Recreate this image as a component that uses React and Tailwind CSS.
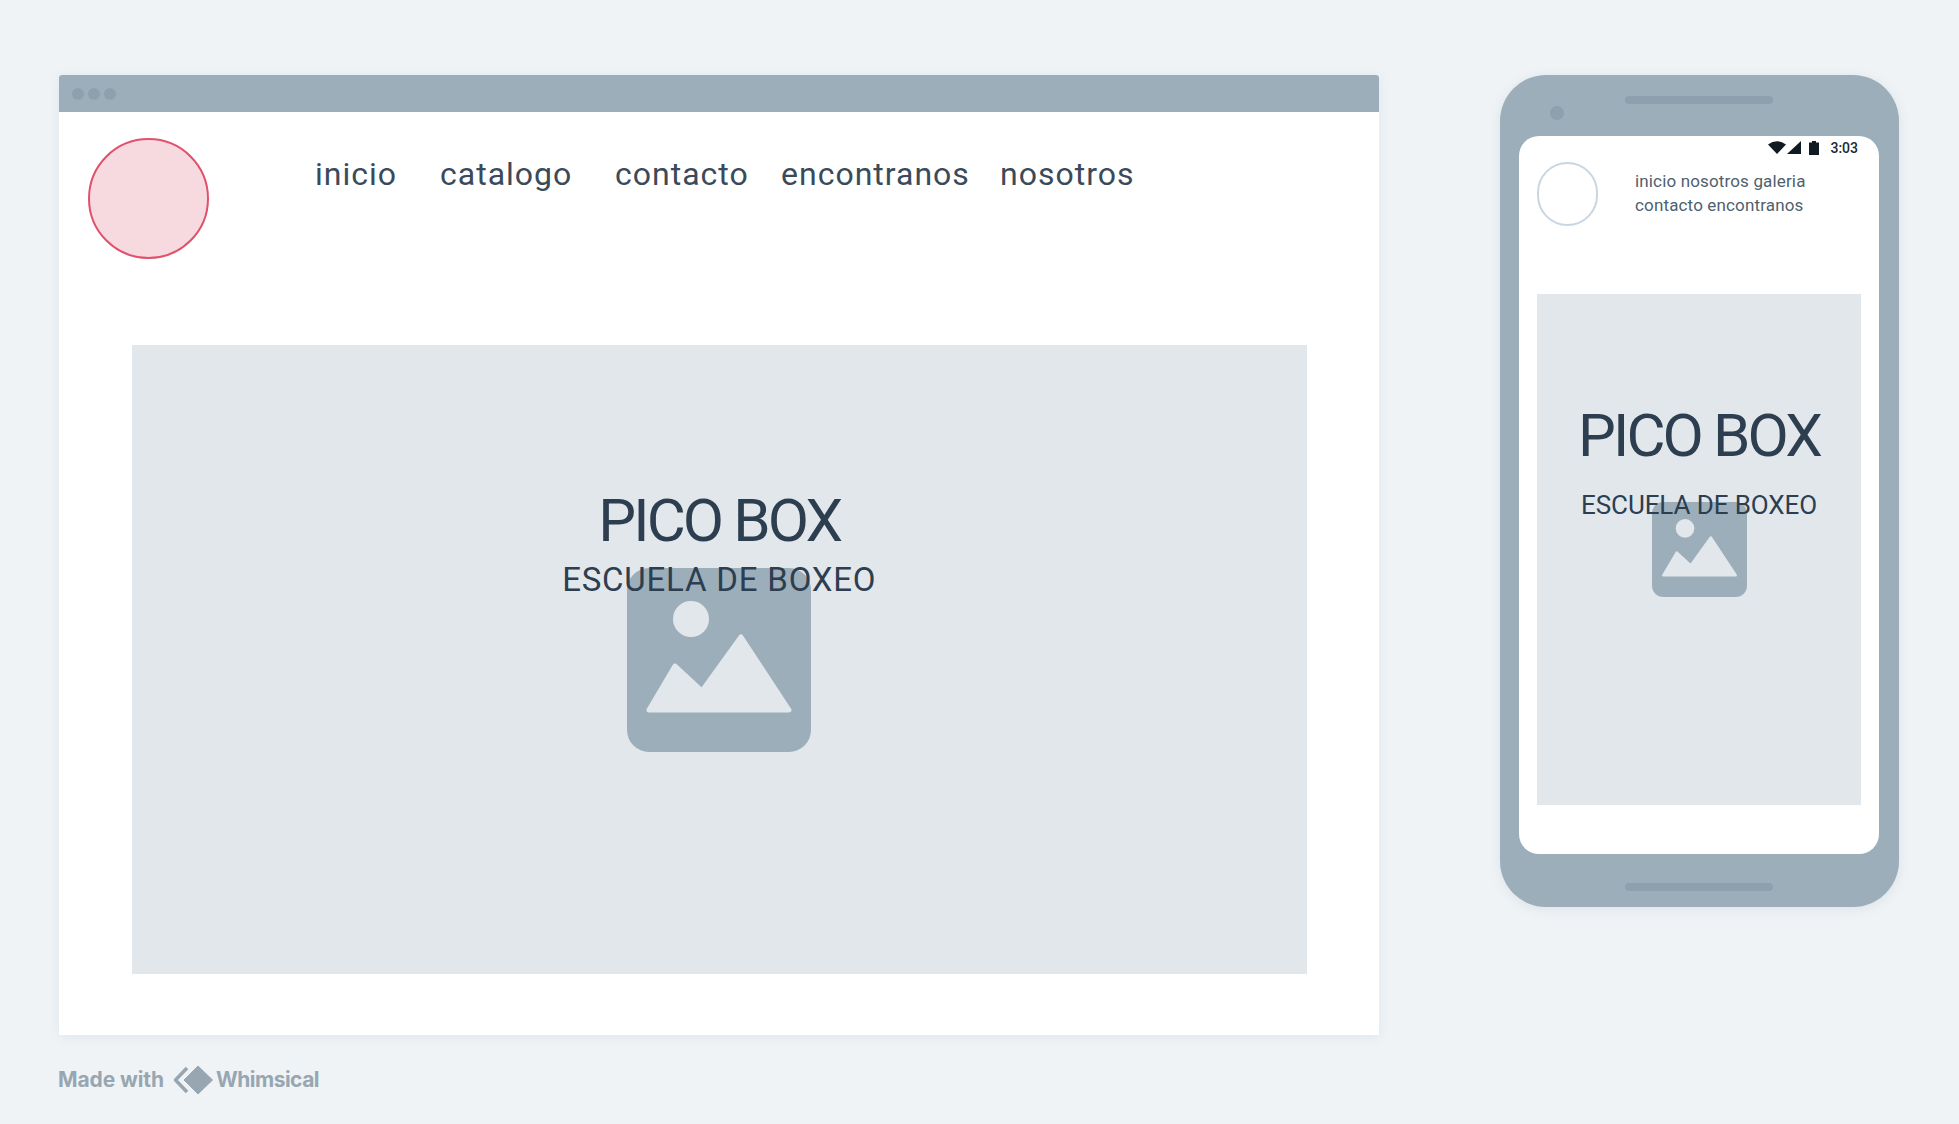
const din = "font-['Roboto','Noto_Sans',sans-serif]";

const ImageIcon = ({ className }) => (
  <svg viewBox="0 0 184 184" className={className}>
    <rect width="184" height="184" rx="22" fill="#9daebb" />
    <circle cx="64" cy="51" r="18" fill="#e2e7ec" />
    <path
      d="M22 142 L48 98 L75 123 L114 69 L162 142 Z"
      fill="#e2e7ec"
      stroke="#e2e7ec"
      strokeWidth="5"
      strokeLinejoin="round"
    />
  </svg>
);

const WhimsicalLogo = () => (
  <svg viewBox="0 0 40 30" className="w-10 h-[30px]">
    <path d="M14 3 L2.5 15 L14 27" fill="none" stroke="#98a6b1" strokeWidth="3.5" strokeLinejoin="round" />
    <path d="M25 1 L39.5 15 L25 29 L11 15 Z" fill="#98a6b1" stroke="#98a6b1" strokeLinejoin="round" strokeWidth="1" />
  </svg>
);

const StatusBar = () => (
  <div className="flex items-center justify-end h-[26px] pb-[3px] pr-[21px]">
    <svg viewBox="0 0 18 13" className="w-[18px] h-[13px]">
      <path d="M0 3.5 Q9 -3 18 3.5 L9 13 Z" fill="#111a22" />
    </svg>
    <svg viewBox="0 0 14 13" className="w-[14px] h-[13px] ml-[1px]">
      <path d="M14 0 V13 H0 Z" fill="#111a22" />
    </svg>
    <svg viewBox="0 0 10 14" className="w-[10px] h-[14px] ml-[8px]">
      <path d="M3 0 H7 V1.5 H10 V14 H0 V1.5 H3 Z" fill="#111a22" />
    </svg>
    <span className={`${din} ml-[11px] text-[14px] font-medium leading-none text-[#1c2833]`}>3:03</span>
  </div>
);

const navItems = [
  { label: 'inicio', width: 'w-[125px]' },
  { label: 'catalogo', width: 'w-[175px]' },
  { label: 'contacto', width: 'w-[166px]' },
  { label: 'encontranos', width: 'w-[219px]' },
  { label: 'nosotros', width: 'w-[140px]' },
];

const App = () => {
  return (
    <div className="w-[1959px] h-[1124px] bg-[#eff3f6] overflow-hidden flex flex-col pt-[75px] pl-[59px]">
      <div className="flex items-start gap-[120.5px]">
        {/* Desktop wireframe */}
        <div className="w-[1320px] h-[960px] bg-white shadow-[0_2px_12px_rgba(70,90,110,0.08)] rounded-t-[3px]">
          <div className="h-[37px] bg-[#9daebb] rounded-t-[3px] flex items-center gap-[4px] pl-[13px]">
            <div className="w-[12px] h-[12px] rounded-full bg-[#8e9fad]" />
            <div className="w-[12px] h-[12px] rounded-full bg-[#8e9fad]" />
            <div className="w-[12px] h-[12px] rounded-full bg-[#8e9fad]" />
          </div>
          <div className="flex pl-[29px] pt-[26px] h-[233px]">
            <div className="w-[121px] h-[121px] rounded-full bg-[#f7dae0] border-2 border-[#e0526c]" />
            <nav className={`${din} flex ml-[106px] pt-[12px] text-[32px] leading-[48px] tracking-[1px] text-[#3a4a5a] h-[60px]`}>
              {navItems.map((item) => (
                <span key={item.label} className={item.width}>{item.label}</span>
              ))}
            </nav>
          </div>
          <div className="relative ml-[72.5px] mr-[72px] h-[629px] bg-[#e2e7ec] flex items-center justify-center">
            <ImageIcon className="w-[184px] h-[184px]" />
            <div className={`${din} absolute top-[141px] inset-x-0 flex flex-col items-center text-[#2c3e4f]`}>
              <h1 className="text-[60px] leading-[70px] tracking-[-2.9px]">PICO BOX</h1>
              <p className="text-[33px] leading-[40px] tracking-[0.8px] mt-[4px]">ESCUELA DE BOXEO</p>
            </div>
          </div>
        </div>

        {/* Phone wireframe */}
        <div className="w-[399px] h-[832px] bg-[#9daebb] rounded-[46px] shadow-[0_2px_12px_rgba(70,90,110,0.1)] flex flex-col items-center">
          <div className="w-[148px] h-[8px] rounded-full bg-[#8e9fad] mt-[21px]" />
          <div className="w-[14px] h-[14px] rounded-full bg-[#8e9fad] self-start ml-[50px] mt-[2px]" />
          <div className="w-[360px] h-[718px] bg-white rounded-[20px] mt-[16px] flex flex-col">
            <StatusBar />
            <div className="flex h-[132px] pl-[18px]">
              <div className="w-[61px] h-[64px] rounded-full border-2 border-[#c9d6e2]" />
              <p className={`${din} ml-[37px] mt-[7px] text-[17px] leading-[24px] tracking-[0.15px] text-[#4f5f6e] w-[190px]`}>
                inicio nosotros galeria contacto encontranos
              </p>
            </div>
            <div className="relative mx-[18px] h-[511px] bg-[#e2e7ec] flex justify-center">
              <ImageIcon className="w-[95px] h-[95px] mt-[208px]" />
              <div className={`${din} absolute top-[107px] inset-x-0 flex flex-col items-center text-[#2c3e4f]`}>
                <h2 className="text-[60px] leading-[70px] tracking-[-2.9px]">PICO BOX</h2>
                <p className="text-[26px] leading-[32px] tracking-[-0.1px] mt-[18px]">ESCUELA DE BOXEO</p>
              </div>
            </div>
          </div>
          <div className="w-[148px] h-[8px] rounded-full bg-[#8e9fad] mt-[29px]" />
        </div>
      </div>

      {/* Footer */}
      <div className="flex items-center mt-[30px] ml-[-1px] font-['Inter',sans-serif] font-bold text-[21px] leading-[30px] text-[#98a6b1] tracking-[-0.1px]">
        <span>Made with</span>
        <span className="ml-[9px]"><WhimsicalLogo /></span>
        <span className="ml-[3px] tracking-[-0.5px]">Whimsical</span>
      </div>
    </div>
  );
};

export default App;
